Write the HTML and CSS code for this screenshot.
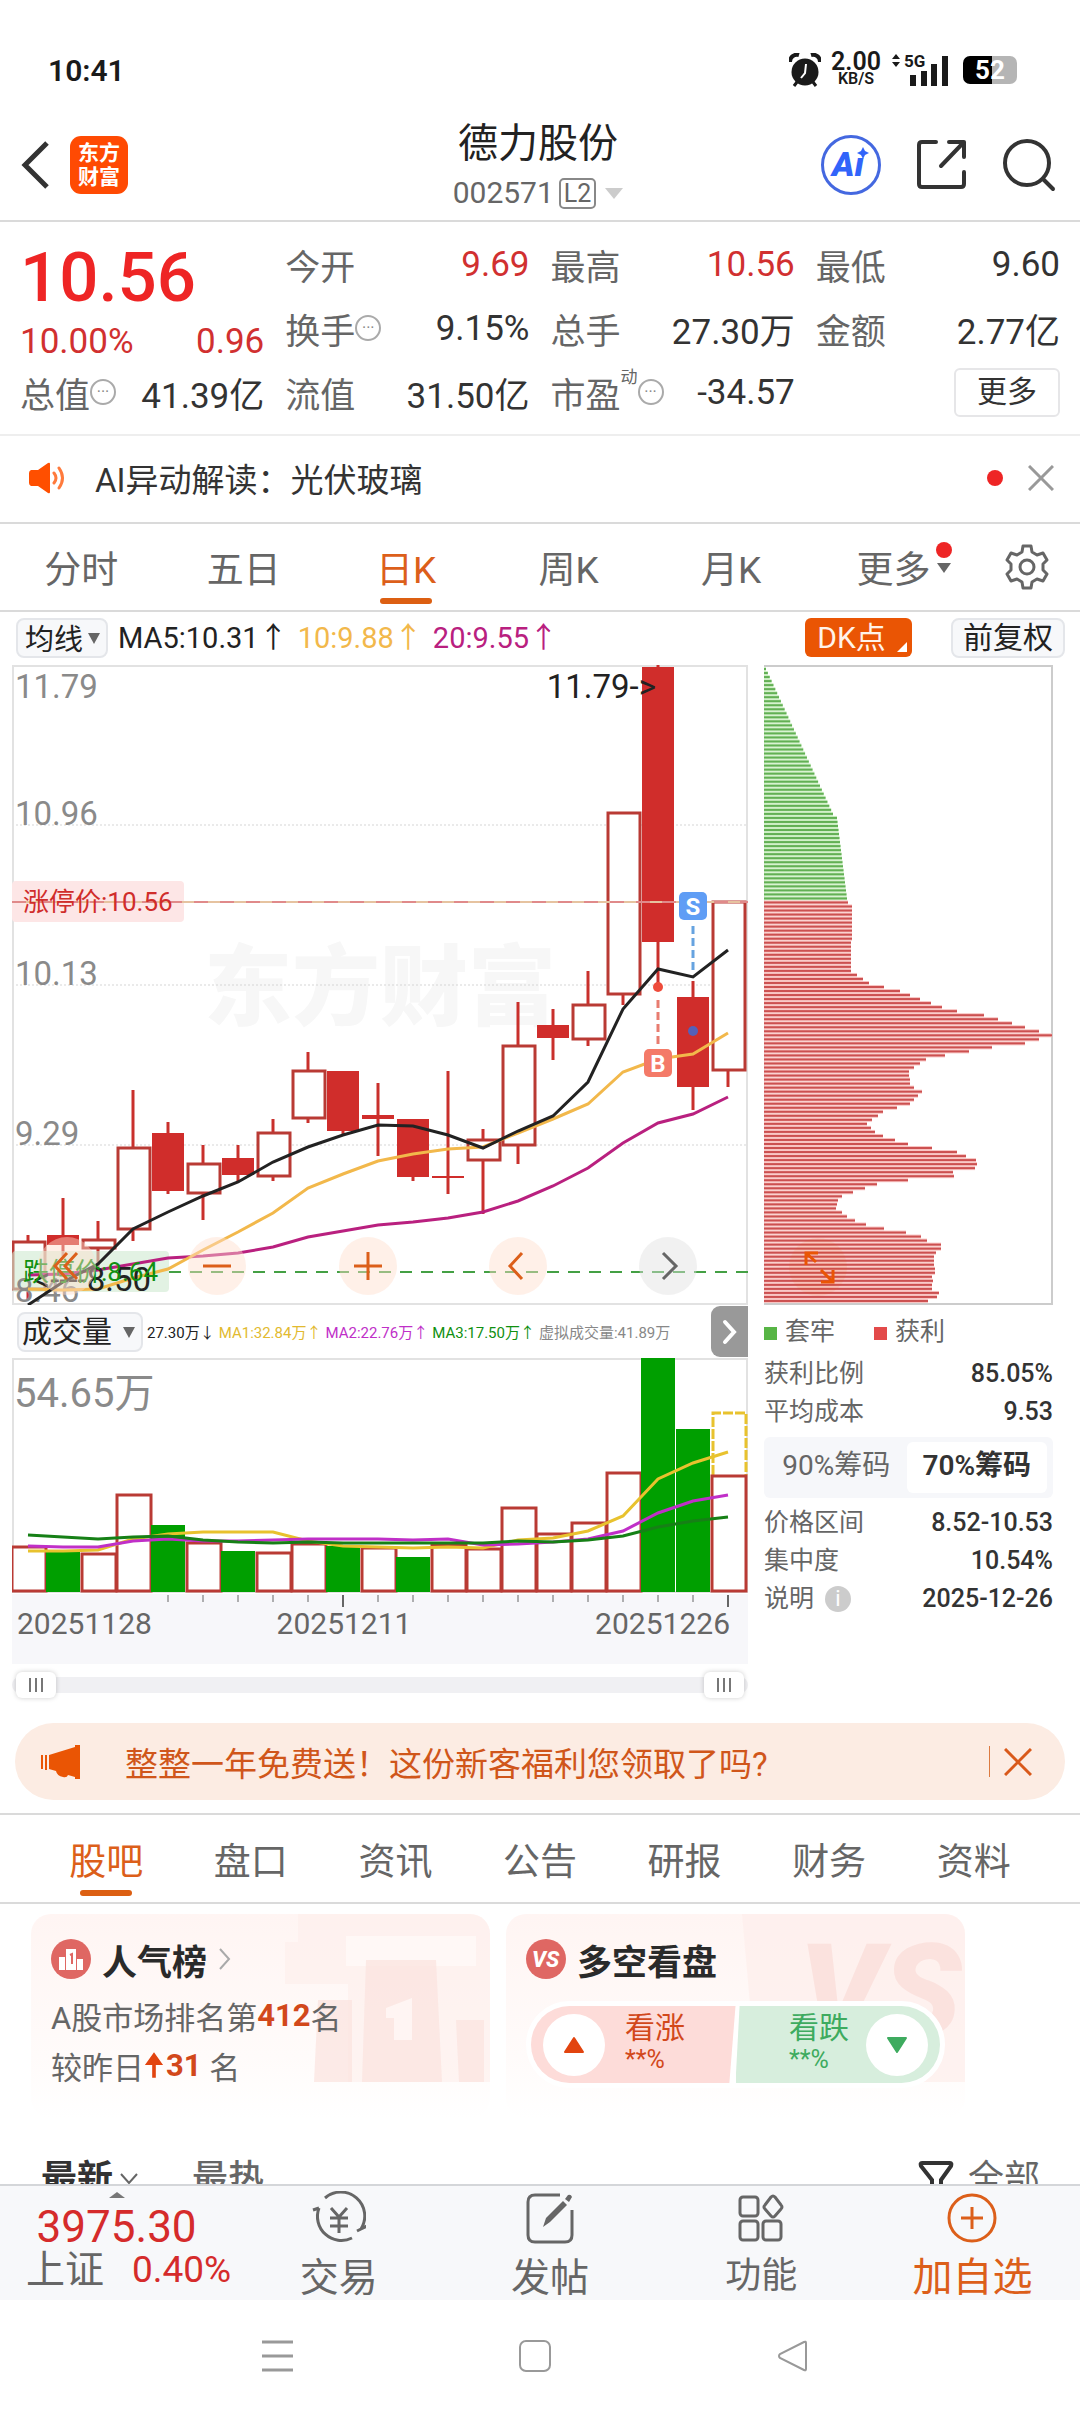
FILE: index.html
```html
<!DOCTYPE html>
<html lang="zh-CN">
<head>
  <meta charset="UTF-8">
  <meta name="viewport" content="width=device-width, initial-scale=1.0">
  <title>德力股份 002571</title>
  <link rel="stylesheet" href="styles.css">
</head>
<body>
  <div class="status-bar">
    <span class="clock">10:41</span>
    <div class="status-icons">
      <svg width="32" height="34" viewBox="0 0 32 34">
        <circle cx="16" cy="19" r="13.500" fill="#1a1a1a"/>
        <path d="M1 9a7 7 0 0 1 9-7M31 9a7 7 0 0 0-9-7" stroke="#1a1a1a" stroke-width="4" fill="none"/>
        <path d="M8 29l-3 4M24 29l3 4" stroke="#1a1a1a" stroke-width="3"/>
        <path d="M17 11l-1 9-4 5" stroke="#fff" stroke-width="2" fill="none"/>
      </svg>
      <div class="net-speed"><b>2.00</b><span>KB/S</span></div>
      <svg class="signal" width="58" height="34" viewBox="0 0 58 34">
        <path d="M5 1l4 5H1zM5 14l4-5H1z" fill="#1a1a1a"/>
        <text x="13" y="14" class="signal-text">5G</text>
        <path d="M22 33V22M33 33V18M43 33V11M54 33V3" stroke="#1a1a1a" stroke-width="6" stroke-linecap="butt"/>
      </svg>
      <div class="battery"><span>52</span></div>
    </div>
  </div>

  <header class="header">
    <div class="header-side">
      <button class="icon-btn" aria-label="返回">
        <svg width="30" height="48" viewBox="0 0 30 48"><path d="M27 2L5 24l22 22" fill="none" stroke="#333" stroke-width="5"/></svg>
      </button>
      <a class="brand" href="#">东方<br>财富</a>
    </div>
    <div class="header-title">
      <h1>德力股份</h1>
      <div class="code">002571<span class="level">L2</span><i class="caret"></i></div>
    </div>
    <div class="header-side header-tools">
      <button class="icon-btn" aria-label="AI">
        <svg width="62" height="62" viewBox="0 0 62 62">
          <circle cx="31" cy="31" r="28.500" fill="#fff" stroke="#4468e0" stroke-width="3"/>
          <text x="12" y="42" class="ai-text">Aı</text>
          <path d="M43 13l2 4 4 2-4 2-2 4-2-4-4-2 4-2z" fill="#3264fa"/>
        </svg>
      </button>
      <button class="icon-btn" aria-label="分享">
        <svg width="52" height="52" viewBox="0 0 52 52"><g fill="none" stroke="#333" stroke-width="4" stroke-linecap="round" stroke-linejoin="round"><path d="M20 3H6q-3 0-3 3v39q0 3 3 3h39q3 0 3-3V33"/><path d="M33 3h15v15M48 3L25 27"/></g></svg>
      </button>
      <button class="icon-btn" aria-label="搜索">
        <svg width="54" height="54" viewBox="0 0 54 54"><g fill="none" stroke="#333" stroke-width="4" stroke-linecap="round"><circle cx="25" cy="25" r="22"/><path d="M41 41l10 10"/></g></svg>
      </button>
    </div>
  </header>

  <section class="quote">
    <div class="quote-col">
      <strong class="price">10.56</strong>
      <div class="change"><span>10.00%</span><span>0.96</span></div>
      <div class="row"><span>总值<i class="more-dot">···</i></span><b>41.39亿</b></div>
    </div>
    <div class="quote-col">
      <div class="row"><span>今开</span><b class="up">9.69</b></div>
      <div class="row"><span>换手<i class="more-dot">···</i></span><b>9.15%</b></div>
      <div class="row"><span>流值</span><b>31.50亿</b></div>
    </div>
    <div class="quote-col">
      <div class="row"><span>最高</span><b class="up">10.56</b></div>
      <div class="row"><span>总手</span><b>27.30万</b></div>
      <div class="row"><span>市盈<sup>动</sup><i class="more-dot">···</i></span><b>-34.57</b></div>
    </div>
    <div class="quote-col">
      <div class="row"><span>最低</span><b>9.60</b></div>
      <div class="row"><span>金额</span><b>2.77亿</b></div>
      <div class="row row-end"><button class="more-btn">更多</button></div>
    </div>
  </section>

  <section class="notice">
    <svg width="38" height="32" viewBox="0 0 38 32"><path d="M2 8h7l10-7q2-1 2 1v28q0 2-2 1L9 24H2q-2-1-2-3V11q0-2 2-3z" fill="#ff4f00"/><path d="M25 11q4 5 0 10M30 6q7 10 0 20" fill="none" stroke="#ff7a3c" stroke-width="3" stroke-linecap="round"/></svg>
    <p>AI异动解读：光伏玻璃</p>
    <i class="red-dot"></i>
    <button class="icon-btn" aria-label="关闭">
      <svg width="26" height="26" viewBox="0 0 26 26"><path d="M1 1l24 24M25 1L1 25" stroke="#999" stroke-width="3"/></svg>
    </button>
  </section>

  <nav class="period-tabs">
    <button>分时</button>
    <button>五日</button>
    <button class="active">日K</button>
    <button>周K</button>
    <button>月K</button>
    <button class="has-more">更多<i class="red-dot"></i></button>
    <button class="settings" aria-label="设置">
      <svg width="48" height="48" viewBox="0 0 48 48"><g fill="none" stroke="#666" stroke-width="3" stroke-linejoin="round"><path d="M20 3h8l1 6 5 3 6-2 4 7-4 4v6l4 4-4 7-6-2-5 3-1 6h-8l-1-6-5-3-6 2-4-7 4-4v-6l-4-4 4-7 6 2 5-3z"/><circle cx="24" cy="24" r="7"/></g></svg>
    </button>
  </nav>

  <div class="ma-bar">
    <label class="picker"><select aria-label="均线"><option>均线</option></select></label>
    <span>MA5:10.31↑</span>
    <span class="ma10">10:9.88↑</span>
    <span class="ma20">20:9.55↑</span>
    <button class="dk-btn">DK点</button>
    <button class="adjust-btn">前复权</button>
  </div>

  <main class="charts">
    <div class="chart-main">
      <div class="price-box">
        <svg id="priceChart" viewBox="0 0 736 640"></svg>
        <div class="chart-tools">
          <button aria-label="最左"><svg width="40" height="40" viewBox="0 0 40 40"><path d="M20 7L8 20l12 13M30 7L18 20l12 13"/></svg></button>
          <button aria-label="缩小"><svg width="40" height="40" viewBox="0 0 40 40"><path d="M6 20h28"/></svg></button>
          <button aria-label="放大"><svg width="40" height="40" viewBox="0 0 40 40"><path d="M6 20h28M20 6v28"/></svg></button>
          <button aria-label="左移"><svg width="40" height="40" viewBox="0 0 40 40"><path d="M24 7L12 20l12 13"/></svg></button>
          <button class="off" aria-label="右移"><svg width="40" height="40" viewBox="0 0 40 40"><path d="M15 7l13 13-13 13"/></svg></button>
        </div>
      </div>
      <div class="vol-bar">
        <label class="picker picker-wide"><select aria-label="成交量"><option>成交量</option></select></label>
        <span>27.30万↓</span>
        <span class="v1">MA1:32.84万↑</span>
        <span class="v2">MA2:22.76万↑</span>
        <span class="v3">MA3:17.50万↑</span>
        <span class="v4">虚拟成交量:41.89万</span>
        <button class="next-btn" aria-label="下一项"><svg width="16" height="26" viewBox="0 0 16 26"><path d="M3 3l9 10-9 10" fill="none" stroke="#fff" stroke-width="4" stroke-linecap="round"/></svg></button>
      </div>
      <svg id="volChart" viewBox="0 0 736 306"></svg>
      <div class="range">
        <input type="range" aria-label="开始日期">
        <input type="range" aria-label="结束日期">
      </div>
    </div>

    <aside class="chips">
      <svg id="chipChart" viewBox="0 0 289 640"></svg>
      <div class="legend"><span>套牢</span><span class="gain">获利</span></div>
      <dl>
        <div><dt>获利比例</dt><dd>85.05%</dd></div>
        <div><dt>平均成本</dt><dd>9.53</dd></div>
      </dl>
      <div class="segment">
        <button>90%筹码</button>
        <button class="active">70%筹码</button>
      </div>
      <dl>
        <div><dt>价格区间</dt><dd>8.52-10.53</dd></div>
        <div><dt>集中度</dt><dd>10.54%</dd></div>
        <div><dt>说明<i class="info">i</i></dt><dd>2025-12-26</dd></div>
      </dl>
    </aside>
  </main>

  <section class="promo">
    <svg width="40" height="34" viewBox="0 0 40 34"><path d="M8 10L34 2V0h5v34h-5v-2l-7-2q-1 3-5 2-6-1-7-6l-7-2z" fill="#ea5504"/><path d="M1 10v14M5 10v15" stroke="#ea5504" stroke-width="2"/></svg>
    <a href="#">整整一年免费送！这份新客福利您领取了吗?</a>
    <i class="divider"></i>
    <button class="icon-btn" aria-label="关闭">
      <svg width="28" height="28" viewBox="0 0 28 28"><path d="M1 1l26 26M27 1L1 27" stroke="#d9591a" stroke-width="3"/></svg>
    </button>
  </section>

  <nav class="info-tabs">
    <button class="active">股吧</button>
    <button>盘口</button>
    <button>资讯</button>
    <button>公告</button>
    <button>研报</button>
    <button>财务</button>
    <button>资料</button>
  </nav>

  <section class="cards">
    <article class="card">
      <svg class="card-art" viewBox="0 0 230 204" aria-hidden="true">
        <path d="M38 0h192v168H88V70H25V28h13z" fill="#fdeeeb" opacity=".6"/>
        <path d="M86 22h130v30H86z" fill="#fff8f6"/>
        <path d="M106 46h70l6 122h-80zM58 86h34v82H54zM196 106h28v62h-25z" fill="#fbe2de" opacity=".7"/>
        <path d="M126 94l26-10v42h-18v-22h-8z" fill="#fff5f3"/>
      </svg>
      <h2>
        <svg width="40" height="40" viewBox="0 0 40 40"><circle cx="20" cy="20" r="20" fill="#df6763"/><path d="M8 18h6v13H8zM15 10h10v21H15zM26 20h6v11h-6z" fill="#fff"/><path d="M19 16l2-1v10" stroke="#df6763" stroke-width="2" fill="none"/></svg>
        人气榜
        <svg width="14" height="22" viewBox="0 0 14 22"><path d="M2 1l9 10-9 10" fill="none" stroke="#aaa" stroke-width="2"/></svg>
      </h2>
      <p>A股市场排名第<b>412</b>名</p>
      <p>较昨日<svg width="20" height="30" viewBox="0 0 22 30"><path d="M11 1l10 14h-8v14H9V15H1z" fill="#e2440f"/></svg><b>31</b> 名</p>
    </article>
    <article class="card">
      <svg class="card-art" viewBox="0 0 230 204" aria-hidden="true">
        <path d="M7 0h223v168H22z" fill="#fdeeeb" opacity=".7"/>
        <text x="64" y="122" class="vs-art">VS</text>
      </svg>
      <h2>
        <svg width="40" height="40" viewBox="0 0 40 40"><circle cx="20" cy="20" r="20" fill="#df6763"/><text x="6" y="28" class="vs-text">VS</text></svg>
        多空看盘
      </h2>
      <div class="vote">
        <button class="bull"><i><svg width="22" height="18" viewBox="0 0 22 18"><path d="M11 2l9 14H2z" fill="#e2440f" stroke="#e2440f" stroke-width="2" stroke-linejoin="round"/></svg></i><span>看涨<small>**%</small></span></button>
        <button class="bear"><span>看跌<small>**%</small></span><i><svg width="22" height="18" viewBox="0 0 22 18"><path d="M11 16l9-14H2z" fill="#3eab5f" stroke="#3eab5f" stroke-width="2" stroke-linejoin="round"/></svg></i></button>
      </div>
    </article>
  </section>

  <section class="feed-head">
    <div class="feed-row">
      <button class="latest">最新<svg width="18" height="12" viewBox="0 0 18 12"><path d="M1 1l8 9 8-9" fill="none" stroke="#666" stroke-width="2"/></svg></button>
      <button class="hot">最热</button>
      <button class="filter"><svg width="38" height="36" viewBox="0 0 38 36"><path d="M4 2h28q2 0 1 3L23 19v14l-9-5v-9L3 5q-1-3 1-3z" fill="none" stroke="#333" stroke-width="4"/><path d="M27 25h9v4h-9z" fill="#e8641e"/></svg>全部</button>
    </div>
  </section>

  <footer class="bottom-bar">
    <a class="index" href="#">
      <i></i>
      <strong>3975.30</strong>
      <span>上证<b>0.40%</b></span>
    </a>
    <button>
      <svg width="54" height="54" viewBox="0 0 54 54"><g fill="none" stroke="#666" stroke-width="3"><path d="M13 7A24 24 0 0 1 49 38M49 38l-4 2M49 38l6-3"/><path d="M40 47A24 24 0 0 1 7 17M7 17l-6 2"/><path d="M19 17l8 9 8-9M27 26v16M18 27h18M18 35h18"/></g></svg>
      交易
    </button>
    <button>
      <svg width="54" height="54" viewBox="0 0 54 54"><g fill="none" stroke="#666" stroke-width="3"><path d="M37 4H12q-7 0-7 7v33q0 7 7 7h30q7 0 7-7V19"/></g><path d="M20 36l3-9L40 10l4 4-17 17zM42 8l3-4q3-1 4 2l-3 5z" fill="#666"/></svg>
      发帖
    </button>
    <button class="tools">
      <svg width="54" height="54" viewBox="0 0 54 54"><g fill="none" stroke="#666" stroke-width="3"><rect x="6" y="6" width="18" height="19" rx="3"/><rect x="6" y="30" width="18" height="19" rx="3"/><rect x="29" y="30" width="18" height="19" rx="3"/><path d="M37 6q2-2 4 0l6 8q2 2 0 4l-6 7q-2 2-4 0l-6-7q-2-2 0-4z"/></g></svg>
      功能
    </button>
    <button class="add">
      <svg width="54" height="54" viewBox="0 0 54 54"><g fill="none" stroke="#dc5f1a" stroke-width="3"><circle cx="27" cy="27" r="23"/><path d="M16 27h22M27 16v22"/></g></svg>
      加自选
    </button>
  </footer>

  <nav class="system-nav">
    <button aria-label="任务"><svg width="34" height="34" viewBox="0 0 34 34"><path d="M2 3h31M2 17h31M2 31h31" stroke="#999" stroke-width="3"/></svg></button>
    <button aria-label="主页"><svg width="34" height="34" viewBox="0 0 34 34"><rect x="2" y="2" width="30" height="30" rx="6" fill="none" stroke="#999" stroke-width="2"/></svg></button>
    <button aria-label="返回"><svg width="34" height="34" viewBox="0 0 34 34"><path d="M30 4v26q0 2-2 1L4 19q-2-2 0-4L28 3q2-1 2 1z" fill="none" stroke="#999" stroke-width="2"/></svg></button>
  </nav>

  <script src="script.js"></script>
</body>
</html>
```
FILE: styles.css
```css
* {
  box-sizing: border-box;
}

body {
  margin: 0;
  background: #fff;
  color: #333;
  font-family: Roboto, "Noto Sans CJK SC", sans-serif;
  font-weight: 400;
}

h1, h2, p, dl, dd {
  margin: 0;
  font-weight: 400;
}

button, select {
  margin: 0;
  padding: 0;
  border: 0;
  background: none;
  color: inherit;
  font: inherit;
}

a {
  color: inherit;
  text-decoration: none;
}

i {
  font-style: normal;
}

svg {
  display: block;
  flex: none;
}

.icon-btn {
  display: flex;
}

.red-dot {
  width: 16px;
  height: 16px;
  border-radius: 50%;
  background: #ee2525;
}

/* Status bar */
.status-bar {
  display: flex;
  justify-content: space-between;
  align-items: center;
  height: 110px;
  padding: 30px 63px 0 48px;
}

.clock {
  font-size: 30px;
  font-weight: 600;
  color: #1a1a1a;
}

.status-icons {
  display: flex;
  align-items: center;
  gap: 10px;
  color: #1a1a1a;
}

.net-speed {
  display: flex;
  flex-direction: column;
  align-items: center;
  font-weight: 600;
  font-size: 16px;
  line-height: 16px;
}

.net-speed b {
  font-size: 25px;
  line-height: 18px;
  font-weight: 600;
}

.signal-text {
  font-size: 17px;
  font-weight: 700;
  fill: #1a1a1a;
}

.battery {
  width: 54px;
  height: 28px;
  margin-left: 4px;
  border-radius: 7px;
  background: linear-gradient(90deg, #000 54%, #b5b5b5 54%);
  color: #fff;
  font-size: 26px;
  line-height: 28px;
  font-weight: 700;
  text-align: center;
}

/* Header */
.header {
  display: grid;
  grid-template-columns: 1fr auto 1fr;
  align-items: center;
  height: 112px;
  padding: 0 24px 0 20px;
  border-bottom: 2px solid #dadada;
}

.header-side {
  display: flex;
  align-items: center;
  gap: 20px;
}

.header-tools {
  justify-content: flex-end;
  gap: 34px;
}

.brand {
  width: 58px;
  height: 58px;
  padding-top: 5px;
  border-radius: 11px;
  background: #ff4a03;
  color: #fff;
  font-size: 21px;
  line-height: 24px;
  font-weight: 700;
  text-align: center;
}

.header-title {
  padding-top: 2px;
  text-align: center;
}

.header-title h1 {
  color: #222;
  font-size: 40px;
  line-height: 54px;
}

.code {
  display: flex;
  justify-content: center;
  align-items: center;
  color: #666;
  font-size: 30px;
  line-height: 44px;
}

.level {
  margin: 0 9px 0 5px;
  padding: 0 3px;
  border: 2px solid #888;
  border-radius: 5px;
  font-size: 25px;
  line-height: 27px;
}

.caret {
  border: 9px solid transparent;
  border-top: 11px solid #ccc;
  border-bottom: 0;
}

.ai-text {
  fill: #3264fa;
  font-size: 34px;
  font-weight: 900;
  font-style: italic;
}

/* Quote */
.quote {
  display: grid;
  grid-template-columns: repeat(4, 1fr);
  gap: 21px;
  padding: 10px 20px;
  border-bottom: 2px solid #eee;
  font-size: 35px;
}

.price {
  display: block;
  color: #ee2525;
  font-size: 69px;
  line-height: 92px;
  font-weight: 500;
}

.change {
  display: flex;
  justify-content: space-between;
  color: #d13030;
  line-height: 36px;
}

.row {
  display: flex;
  justify-content: space-between;
  align-items: center;
  height: 64px;
  white-space: nowrap;
}

.row span {
  display: flex;
  align-items: center;
  color: #666;
}

.row b {
  font-weight: 400;
}

.row .up {
  color: #d13030;
}

.row sup {
  align-self: flex-start;
  font-size: 17px;
  line-height: 20px;
}

.row-end {
  justify-content: flex-end;
}

.more-dot {
  width: 26px;
  height: 26px;
  border: 2px solid #aaa;
  border-radius: 50%;
  color: #888;
  font-size: 16px;
  line-height: 22px;
  text-align: center;
}

.more-btn {
  width: 106px;
  height: 49px;
  border: 2px solid #e6e6e8;
  border-radius: 6px;
  color: #333;
  font-size: 30px;
  line-height: 40px;
}

/* Notice */
.notice {
  display: flex;
  align-items: center;
  height: 88px;
  padding: 0 26px 2px 29px;
  border-bottom: 2px solid #dadada;
}

.notice p {
  flex: 1;
  margin-left: 28px;
  font-size: 33px;
}

.notice .icon-btn {
  margin-left: 25px;
}

/* Period tabs */
.period-tabs {
  display: grid;
  grid-template-columns: repeat(6, 162fr) 105fr;
  height: 88px;
  border-bottom: 2px solid #dadada;
}

.period-tabs button,
.info-tabs button {
  position: relative;
  color: #666;
  font-size: 37px;
}

.period-tabs .active,
.info-tabs .active {
  color: #dc5f1a;
}

.period-tabs .active::after,
.info-tabs .active::after {
  content: "";
  position: absolute;
  bottom: 6px;
  left: 50%;
  width: 52px;
  height: 6px;
  margin-left: -26px;
  border-radius: 3px;
  background: #dc5f12;
}

.has-more::after {
  content: "";
  position: absolute;
  right: 24px;
  top: 39px;
  border: 7px solid transparent;
  border-top: 10px solid #666;
  border-bottom: 0;
}

.has-more .red-dot {
  position: absolute;
  right: 23px;
  top: 18px;
}

.settings {
  display: flex;
  align-items: center;
  justify-content: center;
}

/* Moving averages */
.ma-bar {
  display: flex;
  align-items: center;
  height: 53px;
  padding: 0 15px 2px 16px;
  font-size: 29px;
  line-height: 40px;
  white-space: nowrap;
}

.ma-bar span {
  margin-left: 10px;
  color: #222;
}

.ma-bar .ma10 { color: #f2b84b; }
.ma-bar .ma20 { color: #b9207f; }

.picker {
  position: relative;
  display: block;
  flex: none;
}

.picker select {
  appearance: none;
  display: block;
  width: 92px;
  height: 40px;
  padding-left: 7px;
  border: 2px solid #e4e6ea;
  border-radius: 8px;
  background: #f7f8fa;
  color: #222;
  font-size: 29px;
}

.picker-wide select {
  width: 126px;
  padding-left: 3px;
  font-size: 30px;
}

.picker::after {
  content: "";
  position: absolute;
  right: 8px;
  top: 15px;
  border: 6px solid transparent;
  border-top: 11px solid #666;
  border-bottom: 0;
}

.dk-btn {
  position: relative;
  width: 107px;
  height: 39px;
  margin-left: auto;
  padding-right: 14px;
  border-radius: 6px;
  background: #ea5504;
  color: #fff3ea;
  font-size: 30px;
  line-height: 38px;
}

.dk-btn::after {
  content: "";
  position: absolute;
  right: 5px;
  bottom: 5px;
  border-left: 10px solid transparent;
  border-bottom: 10px solid #fff;
}

.adjust-btn {
  width: 114px;
  height: 40px;
  margin-left: 39px;
  border: 2px solid #e4e6ea;
  border-radius: 8px;
  background: #f7f8fa;
  color: #222;
  font-size: 30px;
  line-height: 34px;
}

/* Charts */
.charts {
  display: grid;
  grid-template-columns: 736fr 289fr;
  gap: 16px;
  padding: 0 27px 0 12px;
}

.charts > div > svg,
.price-box > svg,
.chips > svg {
  width: 100%;
}

.price-box {
  position: relative;
}

.chart-tools {
  position: absolute;
  left: 26px;
  right: 51px;
  bottom: 10px;
  display: flex;
  justify-content: space-between;
}

.chart-tools button {
  display: flex;
  align-items: center;
  justify-content: center;
  width: 58px;
  height: 58px;
  border-radius: 50%;
  background: rgba(255, 222, 204, .45);
}

.chart-tools path {
  fill: none;
  stroke: #dc5f1a;
  stroke-width: 3;
}

.chart-tools .off {
  background: rgba(225, 225, 225, .45);
}

.chart-tools .off path {
  stroke: #666;
}

.axis { font-size: 33px; fill: #8a8a8a; }
.vol-axis { font-size: 40px; fill: #8a8a8a; }
.mark { font-size: 33px; fill: #222; }
.limit { font-size: 26px; }
.date { font-size: 30px; fill: #666; }
.sign { font-size: 24px; font-weight: 700; fill: #fff; }
.watermark { font-size: 88px; font-weight: 900; fill: #f7f7f7; }
.line { fill: none; stroke-width: 3; }

.vol-bar {
  display: flex;
  align-items: center;
  gap: 4px;
  height: 53px;
  padding-left: 5px;
  font-size: 15px;
  color: #222;
  white-space: nowrap;
}

.vol-bar .v1 { color: #e2ba30; }
.vol-bar .v2 { color: #c02fc8; }
.vol-bar .v3 { color: #109010; }
.vol-bar .v4 { color: #888; }

.next-btn {
  display: flex;
  align-items: center;
  justify-content: center;
  width: 37px;
  height: 51px;
  margin-left: auto;
  border-radius: 9px 0 0 9px;
  background: #999;
}

.range {
  display: flex;
  justify-content: space-between;
  align-items: center;
  height: 16px;
  margin: 13px 0 6px;
  padding: 0 4px;
  border-radius: 8px;
  background: #f0f0f3;
}

.range input {
  appearance: none;
  width: 40px;
  height: 26px;
  margin: 0;
  background: none;
}

.range input::-webkit-slider-thumb {
  appearance: none;
  width: 40px;
  height: 26px;
  border-radius: 6px;
  background:
    linear-gradient(90deg, #777 2px, transparent 2px 6px, #777 6px 8px, transparent 8px 12px, #777 12px) center / 14px 14px no-repeat,
    #fff;
  box-shadow: 0 0 5px rgba(0, 0, 0, .2);
}

/* Chip distribution */
.legend {
  display: flex;
  gap: 39px;
  margin: 8px 0 4px;
  color: #666;
  font-size: 25px;
  line-height: 38px;
}

.legend span::before {
  content: "";
  display: inline-block;
  width: 13px;
  height: 13px;
  margin-right: 8px;
  background: #57b545;
}

.legend .gain::before {
  background: #e34a4a;
}

.chips dl div {
  display: flex;
  justify-content: space-between;
  font-size: 25px;
  line-height: 38px;
}

.chips dt {
  display: flex;
  align-items: center;
  color: #666;
}

.chips dd {
  font-weight: 500;
}

.info {
  width: 26px;
  height: 26px;
  margin-left: 11px;
  border-radius: 50%;
  background: #ccc;
  color: #fff;
  font-size: 22px;
  line-height: 26px;
  text-align: center;
}

.segment {
  display: grid;
  grid-template-columns: 1fr 1fr;
  height: 61px;
  margin: 6px 0;
  padding: 5px 6px 5px 2px;
  border-radius: 6px;
  background: #f6f7fa;
  color: #666;
  font-size: 28px;
  line-height: 40px;
}

.segment button {
  padding-bottom: 4px;
}

.segment .active {
  border-radius: 6px;
  background: #fff;
  color: #333;
  font-weight: 600;
}

/* Promo */
.promo {
  display: flex;
  align-items: center;
  height: 77px;
  margin: 24px 15px 13px;
  padding: 0 33px 0 26px;
  border-radius: 39px;
  background: #fcece3;
  color: #d0561a;
  font-size: 33px;
}

.promo a {
  flex: 1;
  margin-left: 44px;
}

.divider {
  width: 1px;
  height: 31px;
  margin-right: 14px;
  background: #dc7a40;
}

/* Info tabs */
.info-tabs {
  display: grid;
  grid-template-columns: repeat(7, 1fr);
  height: 91px;
  padding: 0 34px;
  border-top: 2px solid #dadada;
  border-bottom: 2px solid #dadada;
}

/* Cards */
.cards {
  display: grid;
  grid-template-columns: 459fr 459fr 84fr;
  gap: 16px;
  padding: 10px 15px 0 31px;
}

.card {
  position: relative;
  height: 204px;
  padding: 21px 20px;
  border-radius: 20px;
  overflow: hidden;
  background: linear-gradient(#fff5f3, #fffbfa 70%, #fff);
}

.card-art {
  position: absolute;
  top: 0;
  right: 0;
  width: 230px;
  height: 204px;
}

.card h2 {
  position: relative;
  display: flex;
  align-items: center;
  gap: 11px;
  height: 48px;
  color: #2a2a2a;
  font-size: 35px;
  font-weight: 700;
}

.card p {
  position: relative;
  display: flex;
  align-items: center;
  height: 50px;
  color: #666;
  font-size: 31px;
  white-space: pre;
}

.card h2 + p {
  margin-top: 7px;
}

.card p b {
  color: #d2481b;
  font-weight: 700;
}

.card p svg {
  margin-right: 2px;
}

.vs-text {
  fill: #fff;
  font-size: 22px;
  font-weight: 800;
  font-style: italic;
}

.vs-art {
  fill: #fbe2de;
  font-size: 130px;
  font-weight: 900;
  font-style: italic;
}

.vote {
  position: relative;
  display: grid;
  grid-template-columns: 1fr 1fr;
  margin: 18px 0 0;
  border: 5px solid #fff;
  border-radius: 44px;
  overflow: hidden;
  background: #fff;
}

.vote button {
  display: flex;
  align-items: center;
  height: 77px;
  padding: 0 12px;
  font-size: 30px;
}

.vote i {
  display: flex;
  align-items: center;
  justify-content: center;
  width: 62px;
  height: 62px;
  border-radius: 50%;
  background: #fff;
}

.vote span {
  padding-bottom: 4px;
  line-height: 34px;
  text-align: left;
}

.vote small {
  display: block;
  font-size: 25px;
  line-height: 30px;
}

.bull {
  gap: 20px;
  background: #fddcd9;
  color: #d2481b;
  clip-path: polygon(0 0, 100% 0, 97% 100%, 0 100%);
}

.bear {
  justify-content: flex-end;
  gap: 17px;
  background: #d7eedd;
  color: #3eab5f;
  clip-path: polygon(2% 0, 100% 0, 100% 100%, 0 100%);
}

/* Feed */
.feed-head {
  height: 66px;
  overflow: hidden;
}

.feed-row {
  display: flex;
  align-items: center;
  padding: 41px 40px 0 41px;
  font-size: 36px;
  line-height: 40px;
}

.latest {
  display: flex;
  align-items: center;
  gap: 7px;
  font-weight: 700;
}

.hot {
  margin-left: 54px;
  color: #666;
  font-weight: 500;
}

.filter {
  display: flex;
  align-items: center;
  gap: 12px;
  margin-left: auto;
  color: #666;
}

/* Bottom bar */
.bottom-bar {
  display: grid;
  grid-template-columns: 233fr repeat(4, 211fr);
  height: 116px;
  padding-right: 2px;
  border-top: 2px solid #d4d6d9;
  background: #f7f8fa;
  color: #666;
}

.bottom-bar button {
  display: flex;
  flex-direction: column;
  align-items: center;
  padding-top: 5px;
  font-size: 39px;
  line-height: 66px;
}

.bottom-bar .tools {
  font-size: 36px;
  line-height: 62px;
}

.bottom-bar .add {
  color: #dc5f1a;
  font-size: 40px;
}

.index {
  display: flex;
  flex-direction: column;
  align-items: center;
  color: #666;
}

.index i {
  margin-top: 6px;
  border: 8px solid transparent;
  border-bottom: 6px solid #777;
  border-top: 0;
}

.index strong {
  color: #d52b2b;
  font-size: 44px;
  line-height: 58px;
  font-weight: 400;
}

.index span {
  display: flex;
  gap: 28px;
  margin-left: 24px;
  font-size: 39px;
  line-height: 28px;
}

.index b {
  color: #d52b2b;
  font-size: 37px;
  font-weight: 400;
}

/* System navigation */
.system-nav {
  display: flex;
  justify-content: center;
  gap: 224px;
  height: 112px;
  padding-right: 10px;
}
```
FILE: script.js
```js
const STEP = 35;
const cx = i => 16 + STEP * i;

// top, bottom, high, low, filled
const candles = [
  [577, 624, 570, 634, 0], [570, 580, 533, 591, 1], [575, 583, 556, 604, 0],
  [483, 564, 425, 576, 0], [468, 526, 457, 529, 1], [499, 528, 480, 555, 0],
  [493, 510, 480, 516, 1], [468, 511, 454, 516, 0], [406, 453, 387, 458, 0],
  [406, 466, 406, 469, 1], [450, 454, 418, 491, 1], [454, 512, 454, 516, 1],
  [511, 513, 406, 529, 1], [475, 495, 464, 549, 0], [381, 480, 337, 499, 0],
  [360, 373, 344, 395, 1], [340, 374, 306, 381, 0], [148, 329, 148, 340, 0],
  [2, 277, 0, 322, 1], [332, 422, 316, 445, 1], [237, 405, 237, 422, 0]
];
const ma5 = [640, 617, 599, 564, 547, 531, 517, 497, 482, 470, 460, 461, 470, 483, 466, 451, 417, 344, 304, 312, 285];
const ma10 = [624, 625, 624, 613, 604, 585, 567, 548, 523, 509, 496, 489, 484, 482, 468, 454, 439, 407, 394, 389, 368];
const ma20 = [610, 609, 605, 599, 593, 591, 588, 582, 572, 566, 560, 557, 553, 547, 536, 521, 503, 478, 458, 449, 432];

// top, filled
const volumes = [
  [188, 0], [193, 1], [195, 0], [136, 0], [167, 1], [184, 0], [193, 1], [194, 0],
  [185, 0], [188, 1], [189, 0], [199, 1], [186, 0], [190, 0], [149, 0], [175, 0],
  [164, 0], [114, 0], [0, 1], [71, 1], [117, 0]
];
const vma1 = [193, 193, 192, 181, 176, 174, 174, 174, 183, 188, 189, 190, 189, 190, 182, 180, 173, 158, 121, 105, 94];
const vma2 = [188, 189, 189, 183, 181, 183, 183, 182, 181, 181, 181, 182, 181, 187, 186, 184, 181, 173, 155, 143, 137];
const vma3 = [177, 179, 181, 179, 178, 182, 184, 185, 184, 185, 185, 185, 185, 185, 183, 184, 182, 178, 169, 163, 159];

function line(values, color) {
  const points = values.map((y, i) => `${cx(i)},${y}`).join(' ');
  return `<polyline class="line" points="${points}" stroke="${color}"/>`;
}

function drawPrice() {
  let s = '<text class="watermark" x="192" y="353">东方财富</text>';
  [160, 320, 480].forEach(y => {
    s += `<path d="M0 ${y}H736" stroke="#d5d5d5" stroke-dasharray="2 2"/>`;
  });
  s += '<rect x="1" y="1" width="734" height="638" fill="none" stroke="#e2e2e2" stroke-width="2"/>';
  candles.forEach(([top, bottom, high, low, filled], i) => {
    const x = cx(i);
    s += `<path d="M${x} ${high}V${top}M${x} ${bottom}V${low}" stroke="#c9302c" stroke-width="3"/>`;
    s += filled
      ? `<rect x="${x - 16}" y="${top}" width="32" height="${bottom - top}" fill="#d02d2b"/>`
      : `<rect x="${x - 15}" y="${top}" width="32" height="${bottom - top}" fill="#fff" stroke="#b93a34" stroke-width="3"/>`;
  });

  // price limits
  s += '<rect x="0" y="216" width="172" height="41" rx="4" fill="#fde6e6"/>';
  s += '<path d="M0 237H736" stroke="#e6c3a0" stroke-width="2"/><path d="M0 237H736" stroke="#e08a8a" stroke-width="2" stroke-dasharray="14 12"/>';
  s += '<text class="limit" x="11" y="246" fill="#d02d2b">涨停价:10.56</text>';
  s += '<rect x="0" y="586" width="157" height="41" rx="4" fill="#cfead0" fill-opacity=".6"/>';
  s += '<path d="M157 607H736" stroke="#44a044" stroke-width="2" stroke-dasharray="12 9"/>';

  [['11.79', 33], ['10.96', 160], ['10.13', 320], ['9.29', 480], ['8.46', 637]].forEach(([label, y]) => {
    s += `<text class="axis" x="3" y="${y}">${label}</text>`;
  });
  s += '<text class="mark" x="644" y="33" text-anchor="end">11.79-&gt;</text>';
  s += line(ma20, '#b9207f') + line(ma10, '#f2b84b') + line(ma5, '#222');
  s += '<text class="mark" x="139" y="626" text-anchor="end">&lt;----8.50</text>';
  s += '<text class="limit" x="11" y="616" fill="#109010">跌停价:8.64</text>';

  // buy and sell signals
  s += '<path d="M681 261V307" stroke="#66a3e0" stroke-width="3" stroke-dasharray="8 4"/>';
  s += '<path d="M646 335V380" stroke="#e87c70" stroke-width="3" stroke-dasharray="8 4"/>';
  s += '<circle cx="646" cy="322" r="5" fill="#ee4b3b"/><circle cx="681" cy="366" r="5" fill="#5560b8"/>';
  s += '<rect x="667" y="227" width="28" height="28" rx="5" fill="#5f9df5"/><text class="sign" x="681" y="250" text-anchor="middle">S</text>';
  s += '<rect x="632" y="384" width="28" height="28" rx="5" fill="#f47a68"/><text class="sign" x="646" y="407" text-anchor="middle">B</text>';
  document.getElementById('priceChart').innerHTML = s;
}

function drawVolume() {
  let s = '<rect x="0" y="236" width="736" height="70" fill="#f7f7fa"/>';
  s += '<rect x="1" y="1" width="734" height="233" fill="none" stroke="#e2e2e2" stroke-width="2"/>';
  s += '<path d="M701 117V55H734V117" fill="none" stroke="#e8c22e" stroke-width="3" stroke-dasharray="10 2"/>';
  volumes.forEach(([top, filled], i) => {
    const x = cx(i) - 17;
    s += filled
      ? `<rect x="${x}" y="${top}" width="34" height="${234 - top}" fill="#009f00"/>`
      : `<rect x="${x + 1}" y="${top + 1}" width="34" height="${232 - top}" fill="#fff" stroke="#b93a34" stroke-width="3"/>`;
  });
  s += line(vma1, '#e8c22e') + line(vma2, '#c02fc8') + line(vma3, '#168016');
  s += '<text class="vol-axis" x="2" y="49">54.65万</text>';
  for (let i = 4; i <= 20; i++) {
    const major = i === 9 || i === 20;
    s += `<path d="M${cx(i)} 237v${major ? 12 : 7}" stroke="#666" stroke-width="${major ? 2 : 1}"/>`;
  }
  s += '<text class="date" x="5" y="276">20251128</text>';
  s += '<text class="date" x="332" y="276" text-anchor="middle">20251211</text>';
  s += '<text class="date" x="718" y="276" text-anchor="end">20251226</text>';
  document.getElementById('volChart').innerHTML = s;
}

function chipWidths() {
  const widths = [];
  for (let i = 0; i < 37; i++) widths.push(2 + i * 67 / 36);
  for (let i = 0; i < 21; i++) widths.push(73 + i / 2);
  widths.push(84);
  for (let i = 0; i < 17; i++) widths.push(i < 9 ? 88 : 87);
  return widths.concat([
    93, 99, 105, 120, 136, 146, 156, 167, 178, 193, 220, 234, 248, 261, 275, 288, 275, 261, 228, 205,
    181, 162, 156, 150, 145, 145, 146, 146, 150, 158, 154, 150, 146, 133, 119, 114, 108, 103, 107, 111,
    119, 131, 144, 168, 193, 202, 212, 213, 211, 189, 190, 144, 113, 101, 89, 78, 74, 73, 72, 78,
    83, 91, 102, 120, 142, 157, 163, 177, 177, 172, 170, 170, 170, 171, 171, 168, 169, 168, 168, 175,
    173, 164
  ]);
}

function drawChips() {
  const widths = chipWidths();
  const pitch = 636 / widths.length;
  let s = '<path d="M0 1H288V639H0z" fill="none" stroke="#ccc" stroke-width="2"/>';
  widths.forEach((w, i) => {
    const y = 3 + i * pitch;
    const green = i < 58;
    s += `<rect x="0" y="${y - 1}" width="${w}" height="4" fill="${green ? '#cdeec4' : '#f8c4c2'}"/>`;
    s += `<rect x="0" y="${y}" width="${w}" height="2" fill="${green ? '#62b054' : '#cc5050'}"/>`;
  });
  s += '<circle cx="54" cy="602" r="29" fill="#ea5504" fill-opacity=".08"/>';
  s += '<path d="M42 600V588H54M42 588l10 9M57 617H69V605M69 617l-12-12" fill="none" stroke="#ea5504" stroke-width="3"/>';
  document.getElementById('chipChart').innerHTML = s;
}

drawPrice();
drawVolume();
drawChips();
```
